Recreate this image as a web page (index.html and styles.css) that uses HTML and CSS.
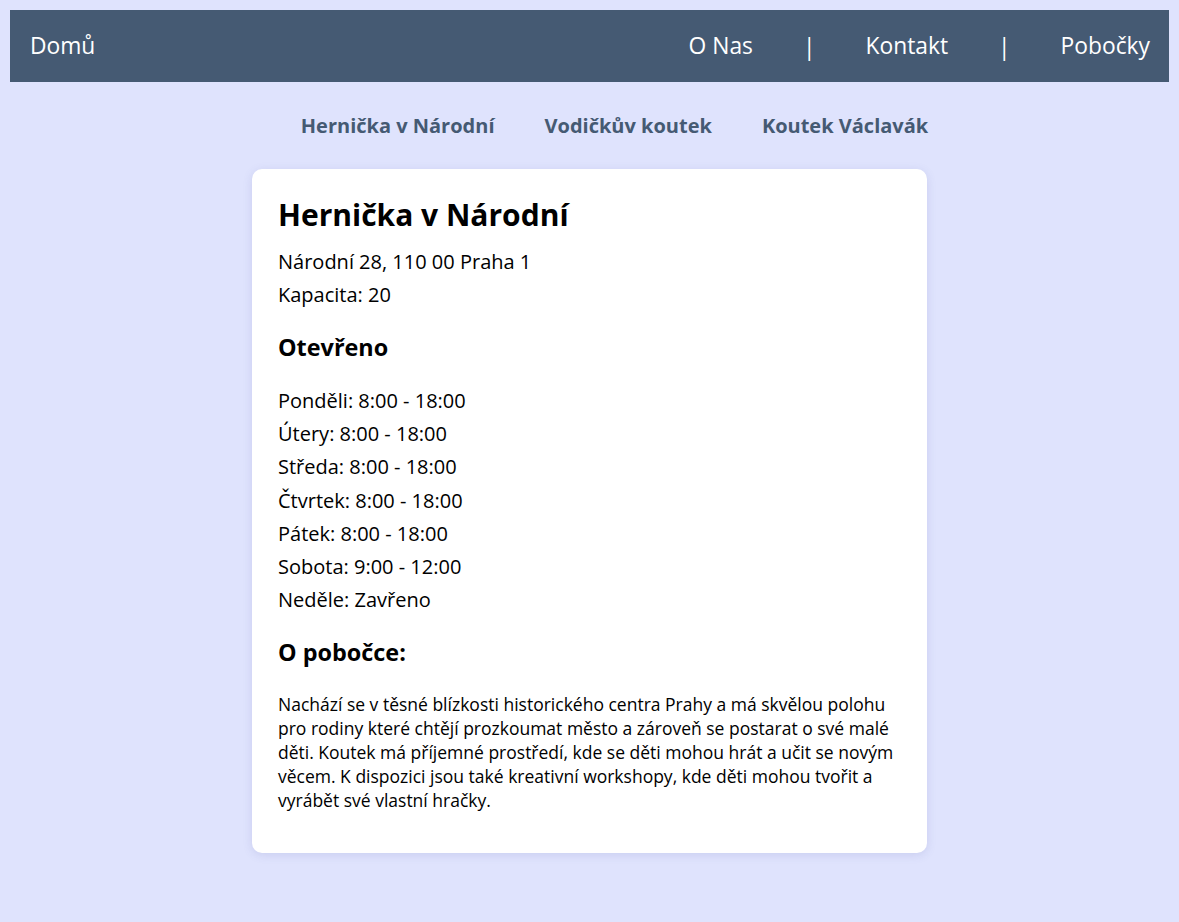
FILE: index.html
```html
<!DOCTYPE html>
<html lang="cs">
<head>
<meta charset="utf-8">
<title>Hernička v Národní</title>
<link rel="stylesheet" href="styles.css">
</head>
<body>
<header class="topbar">
  <a class="topbar-link" href="#">Domů</a>
  <nav class="topbar-right">
    <a class="topbar-link" href="#">O Nas</a>
    <span class="sep">|</span>
    <a class="topbar-link" href="#">Kontakt</a>
    <span class="sep">|</span>
    <a class="topbar-link" href="#">Pobočky</a>
  </nav>
</header>
<nav class="subnav">
  <a class="subnav-link" href="#">Hernička v Národní</a>
  <a class="subnav-link" href="#">Vodičkův koutek</a>
  <a class="subnav-link" href="#">Koutek Václavák</a>
</nav>
<main class="card">
  <h1 class="title">Hernička v Národní</h1>
  <p class="line">Národní 28, 110 00 Praha 1</p>
  <p class="line">Kapacita: 20</p>
  <h2 class="subtitle">Otevřeno</h2>
  <ul class="hours">
    <li>Ponděli: 8:00 - 18:00</li>
    <li>Útery: 8:00 - 18:00</li>
    <li>Středa: 8:00 - 18:00</li>
    <li>Čtvrtek: 8:00 - 18:00</li>
    <li>Pátek: 8:00 - 18:00</li>
    <li>Sobota: 9:00 - 12:00</li>
    <li>Neděle: Zavřeno</li>
  </ul>
  <h2 class="subtitle subtitle-about">O pobočce:</h2>
  <p class="about">Nachází se v těsné blízkosti historického centra Prahy a má skvělou polohu pro rodiny které chtějí prozkoumat město a zároveň se postarat o své malé děti. Koutek má příjemné prostředí, kde se děti mohou hrát a učit se novým věcem. K dispozici jsou také kreativní workshopy, kde děti mohou tvořit a vyrábět své vlastní hračky.</p>
</main>
</body>
</html>
```
FILE: styles.css
```css
* { box-sizing: border-box; }
html, body { margin: 0; }
body {
  background: #dfe3fd;
  font-family: "Open Sans", "DejaVu Sans", sans-serif;
  color: #000;
  padding: 10px 10px 68px;
}
a { text-decoration: none; }
.topbar {
  height: 72px;
  background: #455a73;
  display: flex;
  align-items: center;
  justify-content: space-between;
  padding: 0 19px 0 20px;
}
.topbar-link {
  color: #fff;
  font-size: 22.8px;
  line-height: 30px;
}
.topbar-right {
  display: flex;
  align-items: center;
  gap: 50px;
}
.sep {
  color: #fff;
  font-size: 22.8px;
}
.subnav {
  display: flex;
  justify-content: center;
  padding: 30px 0 29px;
}
.subnav-link {
  color: #455a73;
  font-weight: 700;
  font-size: 20px;
  line-height: 28px;
  margin-left: 50px;
}
.card {
  width: 675px;
  margin: 0 auto;
  background: #fff;
  border-radius: 10px;
  box-shadow: 0 2px 10px rgba(80, 90, 160, 0.15);
  padding: 25px 26px 41px;
}
.title {
  margin: 0 0 10px;
  font-size: 30px;
  line-height: 41px;
  font-weight: 700;
}
.line {
  margin: 0;
  font-size: 20px;
  line-height: 33px;
}
.subtitle {
  margin: 20px 0 21px;
  font-size: 23.4px;
  line-height: 32px;
  font-weight: 700;
}
.subtitle-about {
  margin-bottom: 24px;
}
.hours {
  list-style: none;
  margin: 0;
  padding: 0;
  font-size: 20px;
  line-height: 33.2px;
}
.about {
  margin: 0;
  font-size: 17.5px;
  line-height: 24px;
}
```
